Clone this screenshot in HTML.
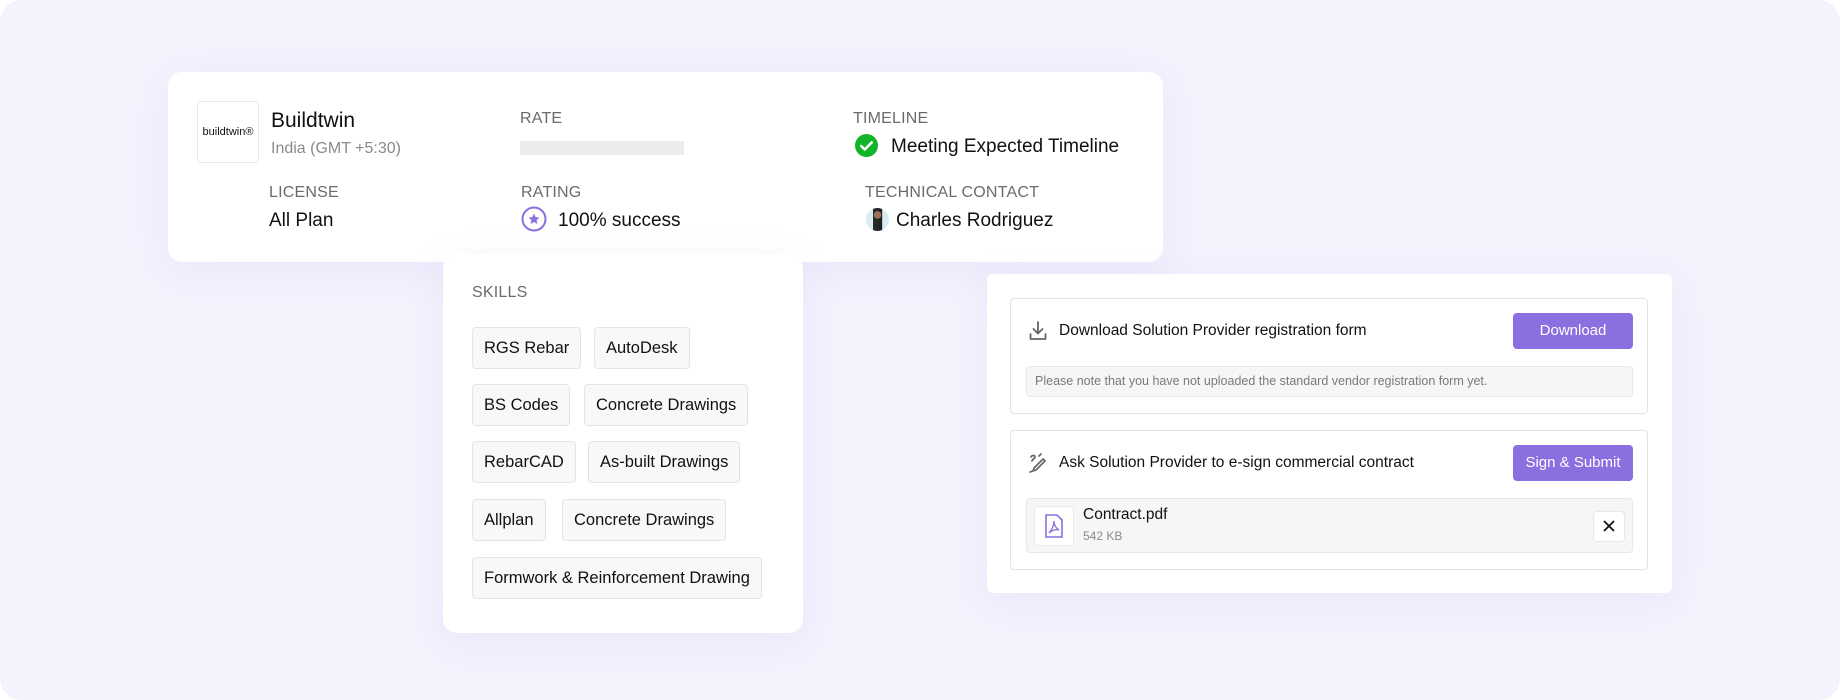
<!DOCTYPE html>
<html><head><meta charset="utf-8"><style>
*{box-sizing:border-box;margin:0;padding:0}
body{width:1840px;height:700px;background:#fff;font-family:"Liberation Sans",sans-serif;color:#111;position:relative;overflow:hidden}
.bg{position:absolute;left:0;top:0;width:1840px;height:700px;background:#f4f2fd;border-radius:22px}
.card{position:absolute;background:#fff;border-radius:14px;box-shadow:0 8px 40px rgba(120,100,200,0.08)}
.abs{position:absolute;white-space:nowrap}
.lbl{font-size:16px;color:#6b6b6b;letter-spacing:.2px}
.val{font-size:19px;color:#111}
.tag{position:absolute;height:42px;border:1px solid #e4e4e4;background:#f8f8f8;border-radius:4px;font-size:16.5px;line-height:40px;padding:0 11px;white-space:nowrap}
.box{position:absolute;border:1px solid #e3e3e3;border-radius:4px;background:#fff}
.btn{position:absolute;background:#8b6fe0;color:#fff;border-radius:4px;font-size:15px;text-align:center;line-height:36px}
</style></head><body>
<div class="bg"></div>

<div class="card" style="left:168px;top:72px;width:995px;height:190px"></div>
<div class="abs" style="left:197px;top:101px;width:62px;height:62px;border:1px solid #e6e6e6;border-radius:4px;font-size:11px;line-height:60px;text-align:center">buildtwin®</div>
<div class="abs val" style="left:271px;top:109px;font-size:21px">Buildtwin</div>
<div class="abs" style="left:271px;top:140px;font-size:16px;color:#8a8a8a">India (GMT +5:30)</div>
<div class="abs lbl" style="left:520px;top:110px">RATE</div>
<div class="abs" style="left:520px;top:141px;width:164px;height:14px;background:#ececec"></div>
<div class="abs lbl" style="left:853px;top:110px">TIMELINE</div>
<svg class="abs" style="left:855px;top:134px" width="23" height="23" viewBox="0 0 24 24"><circle cx="12" cy="12" r="12" fill="#12b52a"/><path d="M6.5 12.5l3.7 3.7 7.3-7.5" stroke="#fff" stroke-width="2.6" fill="none" stroke-linecap="round" stroke-linejoin="round"/></svg>
<div class="abs val" style="left:891px;top:136px">Meeting Expected Timeline</div>
<div class="abs lbl" style="left:269px;top:184px">LICENSE</div>
<div class="abs val" style="left:269px;top:210px">All Plan</div>
<div class="abs lbl" style="left:521px;top:184px">RATING</div>
<svg class="abs" style="left:521px;top:206px" width="26" height="26" viewBox="0 0 26 26"><circle cx="13" cy="13" r="11.5" fill="none" stroke="#8b6fe0" stroke-width="2"/><path d="M13 7.5l1.6 3.6 3.9.4-2.9 2.6.8 3.9-3.4-2-3.4 2 .8-3.9-2.9-2.6 3.9-.4z" fill="#8b6fe0"/></svg>
<div class="abs val" style="left:558px;top:210px">100% success</div>
<div class="abs lbl" style="left:865px;top:184px">TECHNICAL CONTACT</div>
<div class="abs" style="left:866px;top:208px;width:23px;height:23px;border-radius:50%;background:radial-gradient(circle at 50% 30%,#a0705a 0,#a0705a 18%,transparent 20%),linear-gradient(90deg,#d9ecf3 0,#d9ecf3 30%,#2a2a2a 31%,#1e1e1e 70%,#d9ecf3 71%)"></div>
<div class="abs val" style="left:896px;top:210px">Charles Rodriguez</div>

<div class="card" style="left:443px;top:254px;width:360px;height:379px"></div>
<div class="abs lbl" style="left:472px;top:284px;font-size:16px">SKILLS</div>
<div class="tag" style="left:472px;top:327px">RGS Rebar</div>
<div class="tag" style="left:594px;top:327px">AutoDesk</div>
<div class="tag" style="left:472px;top:384px">BS Codes</div>
<div class="tag" style="left:584px;top:384px">Concrete Drawings</div>
<div class="tag" style="left:472px;top:441px">RebarCAD</div>
<div class="tag" style="left:588px;top:441px">As-built Drawings</div>
<div class="tag" style="left:472px;top:499px">Allplan</div>
<div class="tag" style="left:562px;top:499px">Concrete Drawings</div>
<div class="tag" style="left:472px;top:557px">Formwork &amp; Reinforcement Drawing</div>

<div class="card" style="left:987px;top:274px;width:685px;height:319px;border-radius:6px"></div>
<div class="box" style="left:1010px;top:298px;width:638px;height:116px"></div>
<svg class="abs" style="left:1029px;top:321px" width="18" height="20" viewBox="0 0 18 20"><path d="M9 1v11M4.5 8L9 12.5 13.5 8M1.5 13v5h15v-5" stroke="#666" stroke-width="1.8" fill="none" stroke-linecap="round" stroke-linejoin="round"/></svg>
<div class="abs" style="left:1059px;top:322px;font-size:15.5px">Download Solution Provider registration form</div>
<div class="btn" style="left:1513px;top:313px;width:120px;height:36px">Download</div>
<div class="abs" style="left:1026px;top:366px;width:607px;height:31px;background:#f6f6f6;border:1px solid #e8e8e8;border-radius:4px;font-size:12.5px;color:#7a7a7a;line-height:29px;padding-left:8px">Please note that you have not uploaded the standard vendor registration form yet.</div>

<div class="box" style="left:1010px;top:430px;width:638px;height:140px"></div>
<svg class="abs" style="left:1028px;top:453px" width="20" height="20" viewBox="0 0 20 20"><path d="M3 4c1-2 4-2 4 0s-3 2-3 4M8 17l9-9-2-2-9 9-1 3z M11 3l2-2 M5 18l-3 1" stroke="#666" stroke-width="1.7" fill="none" stroke-linecap="round" stroke-linejoin="round"/></svg>
<div class="abs" style="left:1059px;top:454px;font-size:15.5px">Ask Solution Provider to e-sign commercial contract</div>
<div class="btn" style="left:1513px;top:445px;width:120px;height:36px">Sign &amp; Submit</div>
<div class="abs" style="left:1026px;top:498px;width:607px;height:55px;background:#f6f6f6;border:1px solid #e8e8e8;border-radius:4px"></div>
<div class="abs" style="left:1034px;top:506px;width:40px;height:40px;background:#fff;border:1px solid #e8e8e8;border-radius:4px"></div>
<svg class="abs" style="left:1044px;top:514px" width="20" height="24" viewBox="0 0 20 24"><path d="M2 1h11l5 5v17H2z" stroke="#8b6fe0" stroke-width="1.6" fill="none"/><path d="M5 19c3-3 5-8 5-12 0 4 2 7 5 9-3-1-7 0-10 3z" stroke="#8b6fe0" stroke-width="1.3" fill="none"/></svg>
<div class="abs" style="left:1083px;top:506px;font-size:15.5px">Contract.pdf</div>
<div class="abs" style="left:1083px;top:529px;font-size:12px;color:#8a8a8a">542 KB</div>
<div class="abs" style="left:1593px;top:511px;width:32px;height:31px;background:#fff;border:1px solid #e8e8e8;border-radius:4px"></div>
<svg class="abs" style="left:1603px;top:520px" width="12" height="12" viewBox="0 0 12 12"><path d="M1 1l10 10M11 1L1 11" stroke="#111" stroke-width="1.8"/></svg>
</body></html>
